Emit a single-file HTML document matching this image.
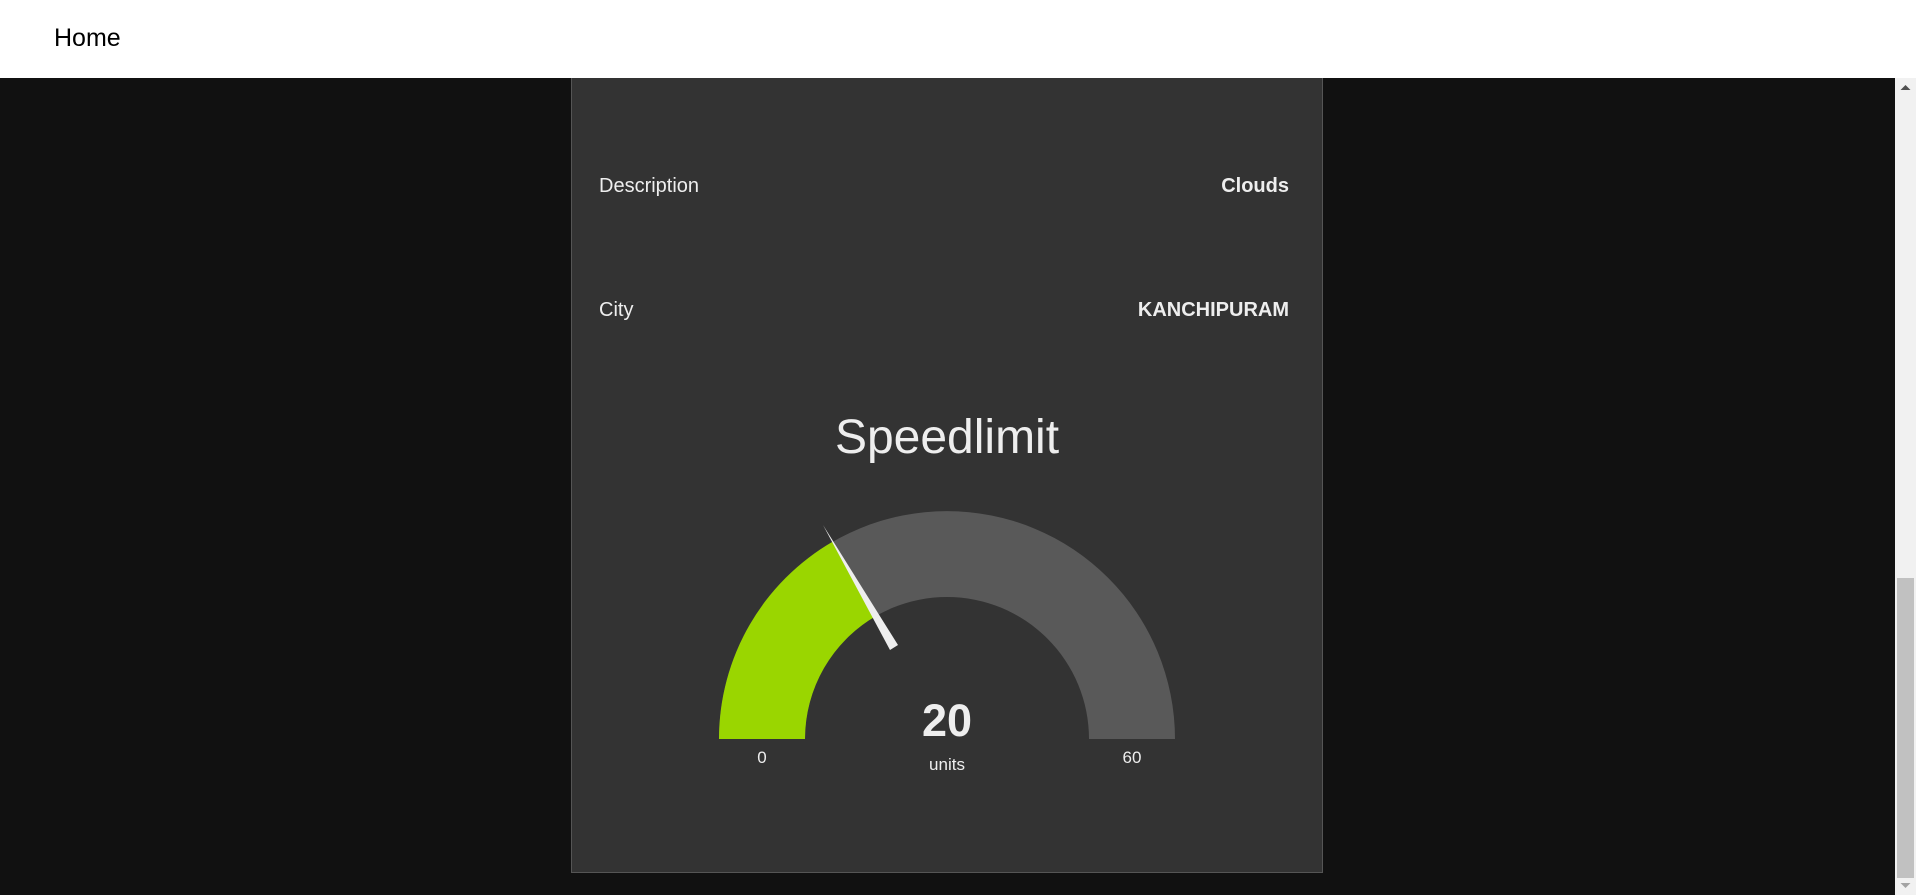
<!DOCTYPE html>
<html><head><meta charset="utf-8"><style>
html,body{margin:0;padding:0;width:1916px;height:895px;overflow:hidden;background:#111;font-family:"Liberation Sans",Arial,sans-serif}
.hdr{position:absolute;left:0;top:0;width:1916px;height:78px;background:#fff}
.hdr span{position:absolute;left:54px;top:24px;font-size:25px;color:#000}
.card{position:absolute;left:571px;top:60px;width:750px;height:811px;background:#333;border:1px solid #555}
.sb{position:absolute;left:1895px;top:78px;width:21px;height:817px;background:#f1f1f1}
.th{position:absolute;left:1897px;top:578px;width:17px;height:300px;background:#c1c1c1}
.t{position:absolute;color:#eee;font-size:20px}
</style></head><body>
<div class="card"></div>
<div class="hdr"><span>Home</span></div>
<div class="sb"></div><div class="th"></div>
<svg style="position:absolute;left:1899px;top:82px" width="13" height="10"><path d="M1.5 8 L6.5 3 L11.5 8Z" fill="#505050"/></svg>
<svg style="position:absolute;left:1899px;top:881px" width="13" height="10"><path d="M1.5 2 L6.5 7 L11.5 2Z" fill="#a3a3a3"/></svg>
<div class="t" style="left:599px;top:175px">Description</div>
<div class="t" style="right:627px;top:175px;font-weight:bold">Clouds</div>
<div class="t" style="left:599px;top:299px">City</div>
<div class="t" style="right:627px;top:299px;font-weight:bold">KANCHIPURAM</div>
<svg style="position:absolute;left:0;top:0" width="1916" height="895">
<text x="947" y="453" font-size="48" fill="#eee" text-anchor="middle" font-family="Liberation Sans,Arial,sans-serif">Speedlimit</text>
<path d="M719 739 A228 228 0 0 1 1175 739 L1089 739 A142 142 0 0 0 805 739Z" fill="#595959"/>
<path d="M719 739 A228 228 0 0 1 833 541.5 L876 616 A142 142 0 0 0 805 739Z" fill="#9ad600"/>
<path d="M823 525 L898 645 L890 650Z" fill="#eee"/>
<text x="947" y="736" font-size="45" font-weight="bold" fill="#eee" text-anchor="middle" font-family="Liberation Sans,Arial,sans-serif">20</text>
<text x="947" y="770" font-size="17" fill="#eee" text-anchor="middle" font-family="Liberation Sans,Arial,sans-serif">units</text>
<text x="762" y="763" font-size="17" fill="#eee" text-anchor="middle" font-family="Liberation Sans,Arial,sans-serif">0</text>
<text x="1132" y="763" font-size="17" fill="#eee" text-anchor="middle" font-family="Liberation Sans,Arial,sans-serif">60</text>
</svg>
</body></html>
